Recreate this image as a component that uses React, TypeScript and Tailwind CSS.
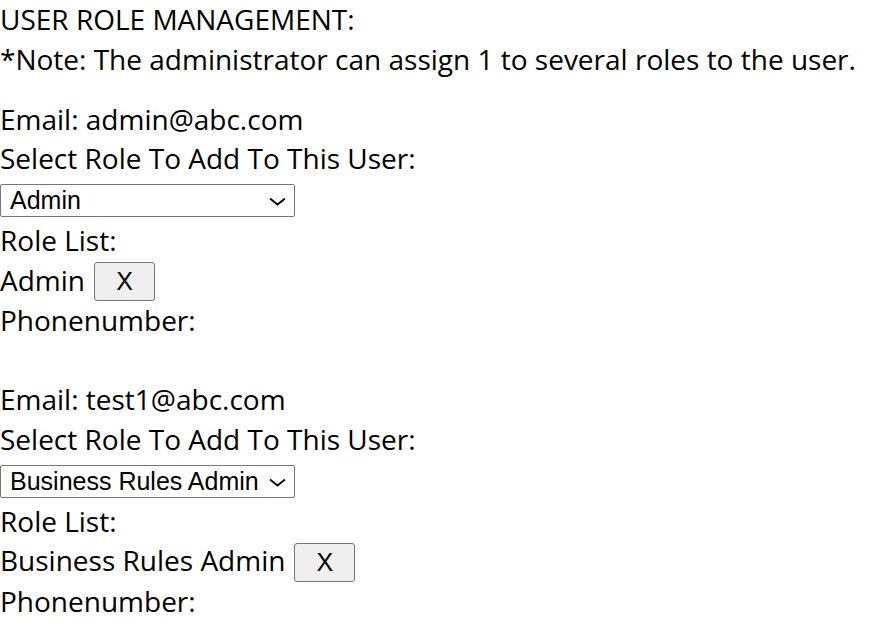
import React from "react";

type User = { email: string; selected: string; roles: string[] };

const users: User[] = [
  { email: "admin@abc.com", selected: "Admin", roles: ["Admin"] },
  { email: "test1@abc.com", selected: "Business Rules Admin", roles: ["Business Rules Admin"] },
];

const options = ["Admin", "Business Rules Admin"];

function Chevron() {
  return (
    <svg width="17" height="9" viewBox="0 0 17 9" className="pointer-events-none absolute right-[9px] top-[13px]">
      <path d="M1 1.5 L8.5 7.5 L16 1.5" fill="none" stroke="#000" strokeWidth="1.8" />
    </svg>
  );
}

function UserBlock({ user }: { user: User }) {
  return (
    <div>
      <div className="h-[39.5px]">Email: {user.email}</div>
      <div className="h-[39.5px]">Select Role To Add To This User:</div>
      <div className="h-[42.5px] pt-[5.25px]">
        <div className="relative w-[295px] h-[33px]">
          <select
            defaultValue={user.selected}
            className="block appearance-none w-full h-full border border-[#767676] rounded-[2px] bg-white pl-[9px] pr-[30px] text-[25px] leading-none text-black outline-none"
            style={{ fontFamily: '"Liberation Sans", Arial, sans-serif' }}
          >
            {options.map((o) => (
              <option key={o} value={o}>
                {o}
              </option>
            ))}
          </select>
          <Chevron />
        </div>
      </div>
      <div className="h-[39.5px]">Role List:</div>
      {user.roles.map((r) => (
        <div key={r} className="h-[40.5px] flex items-start">
          <span>{r}</span>
          <button
            className="ml-[9px] mt-[1.25px] w-[61px] h-[39px] bg-[#efefef] border border-[#767676] rounded-[3px] text-[25px] leading-none text-black flex items-center justify-center"
            style={{ fontFamily: '"Liberation Sans", Arial, sans-serif' }}
          >
            X
          </button>
        </div>
      ))}
      <div className="h-[39.5px]">Phonenumber:</div>
      <div className="h-[39.5px]"></div>
    </div>
  );
}

export default function App() {
  return (
    <div
      className="min-h-screen bg-white text-black text-[28px] leading-[39.5px]"
      style={{ fontFamily: '"Open Sans", "Noto Sans", sans-serif' }}
    >
      <div className="h-[39.5px]">USER ROLE MANAGEMENT:</div>
      <div className="h-[39.5px]">*Note: The administrator can assign 1 to several roles to the user.</div>
      <div className="h-[20.75px]"></div>
      {users.map((u) => (
        <UserBlock key={u.email} user={u} />
      ))}
    </div>
  );
}
